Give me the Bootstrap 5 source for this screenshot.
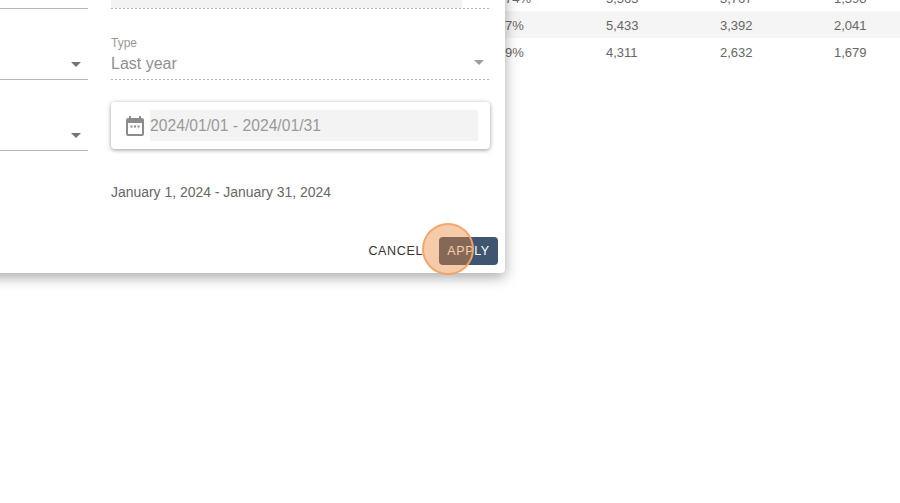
<!DOCTYPE html>
<html lang="en">
<head>
  <meta charset="UTF-8">
  <title>Date range</title>
  <link href="https://cdn.jsdelivr.net/npm/bootstrap@5.3.0/dist/css/bootstrap.min.css" rel="stylesheet">
  <style>
    html, body {
      height: 100%;
      overflow: hidden;
    }

    body {
      background-color: #fff;
      font-family: "Liberation Sans", Arial, sans-serif;
      color: #555;
      position: relative;
    }

    /* table behind the dialog */
    .report-wrap {
      margin-top: -16px;
    }

    .report-row {
      height: 27px;
      padding-top: 3px;
      font-size: 13px;
      color: #666;
    }

    .report-row.striped {
      background-color: #f5f5f5;
    }

    .report-pct { position: absolute; left: 505px; }
    .report-a { position: absolute; left: 606px; }
    .report-b { position: absolute; left: 720px; }
    .report-c { position: absolute; left: 834px; }

    /* dialog */
    .range-dialog {
      position: absolute;
      left: -20px;
      top: -40px;
      width: 525px;
      height: 313px;
      background-color: #fff;
      border-radius: 4px;
      box-shadow: 0 4px 14px rgba(0, 0, 0, 0.35);
      padding: 40px 16px 0 20px;
    }

    .left-col {
      width: 88px;
      margin-right: 23px;
      flex: none;
    }

    .right-col {
      width: 379px;
      flex: none;
    }

    .sel-left {
      height: 42px;
      border-bottom: 1px solid #b5b5b5;
      display: flex;
      align-items: flex-end;
      justify-content: flex-end;
      padding-right: 7px;
      padding-bottom: 12px;
    }

    .sel-left.first {
      height: 9px;
      padding-bottom: 0;
    }

    .sel-left.second,
    .sel-left.third {
      margin-top: 29px;
    }

    .caret-down {
      width: 0;
      height: 0;
      border-left: 5px solid transparent;
      border-right: 5px solid transparent;
      border-top: 5px solid #757575;
    }

    .dotted-line {
      background-image: linear-gradient(to right, #b4b4b4 50%, transparent 50%);
      background-size: 4px 1px;
      background-repeat: repeat-x;
      background-position: left bottom;
    }

    .sel-right-top {
      height: 9px;
      padding-right: 28px;
    }

    .sel-right-top div {
      height: 8px;
      background-color: #f3f3f3;
    }

    .type-field {
      margin-top: 26px;
      height: 45px;
      padding-top: 1px;
      position: relative;
    }

    .type-label {
      font-size: 12px;
      line-height: 14px;
      color: #9a9a9a;
    }

    .type-value {
      font-size: 16px;
      line-height: 20px;
      margin-top: 4px;
      color: #8f8f8f;
    }

    .type-field .caret-down {
      position: absolute;
      right: 6px;
      top: 25px;
      border-top-color: #9e9e9e;
    }

    .date-box {
      margin-top: 22px;
      height: 47px;
      background-color: #fff;
      border-radius: 4px;
      box-shadow: 0 1px 4px rgba(0, 0, 0, 0.4);
      padding: 8px 12px 8px 15px;
      gap: 6px;
    }

    .date-input {
      flex: 1;
      height: 31px;
      background-color: #f3f3f3;
      font-size: 15.7px;
      line-height: 31px;
      color: #9a9a9a;
    }

    .range-text {
      margin-top: 35px;
      font-size: 13.95px;
      line-height: 16px;
      color: #666;
    }

    .dialog-actions {
      position: absolute;
      right: 7px;
      bottom: 8px;
      gap: 16px;
    }

    .btn-cancel-text {
      font-size: 12.5px;
      letter-spacing: 0.65px;
      color: #333;
    }

    .btn-apply {
      width: 59px;
      height: 28px;
      padding: 0;
      border: 0;
      border-radius: 4px;
      background-color: #3f5570;
      color: #fff;
      font-size: 12.5px;
      letter-spacing: 0.65px;
    }

    /* click marker over the Apply button */
    .click-spot {
      position: absolute;
      left: 422px;
      top: 223px;
      width: 52px;
      height: 52px;
      border-radius: 50%;
      background-color: rgba(230, 130, 50, 0.42);
      border: 2px solid rgba(240, 165, 105, 0.95);
      pointer-events: none;
    }
  </style>
</head>
<body>

<!-- Table behind -->
<div class="report-wrap">
  <div class="report-row d-flex align-items-center"><span class="report-pct">74%</span><span class="report-a">5,565</span><span class="report-b">3,767</span><span class="report-c">1,598</span></div>
  <div class="report-row striped d-flex align-items-center"><span class="report-pct">7%</span><span class="report-a">5,433</span><span class="report-b">3,392</span><span class="report-c">2,041</span></div>
  <div class="report-row d-flex align-items-center"><span class="report-pct">9%</span><span class="report-a">4,311</span><span class="report-b">2,632</span><span class="report-c">1,679</span></div>
</div>

<!-- Dialog -->
<div class="range-dialog d-flex">
  <div class="left-col">
    <div class="sel-left first"></div>
    <div class="sel-left second"><span class="caret-down"></span></div>
    <div class="sel-left third"><span class="caret-down"></span></div>
  </div>
  <div class="right-col">
    <div class="sel-right-top dotted-line"><div></div></div>
    <div class="type-field dotted-line">
      <div class="type-label">Type</div>
      <div class="type-value">Last year</div>
      <span class="caret-down"></span>
    </div>
    <div class="date-box d-flex align-items-center">
      <svg width="18" height="20" viewBox="0 0 18 20">
        <path fill="#8c8c8c" d="M3 0h2v2h8V0h2v2h1a2 2 0 0 1 2 2v14a2 2 0 0 1-2 2H2a2 2 0 0 1-2-2V4a2 2 0 0 1 2-2h1z"/>
        <path fill="#fff" d="M2 7h14v10.500a.5.5 0 0 1-.5.5h-13a.5.5 0 0 1-.5-.5z"/>
        <rect x="4.500" y="9.500" width="2" height="2" fill="#8c8c8c"/>
        <rect x="8" y="9.500" width="2" height="2" fill="#8c8c8c"/>
        <rect x="11.500" y="9.500" width="2" height="2" fill="#8c8c8c"/>
      </svg>
      <div class="date-input">2024/01/01 - 2024/01/31</div>
    </div>
    <div class="range-text">January 1, 2024 - January 31, 2024</div>
  </div>
  <div class="dialog-actions d-flex align-items-center">
    <span class="btn-cancel-text">CANCEL</span>
    <button type="button" class="btn btn-apply">APPLY</button>
  </div>
</div>

<div class="click-spot"></div>

<script src="https://cdn.jsdelivr.net/npm/bootstrap@5.3.0/dist/js/bootstrap.bundle.min.js"></script>
</body>
</html>
